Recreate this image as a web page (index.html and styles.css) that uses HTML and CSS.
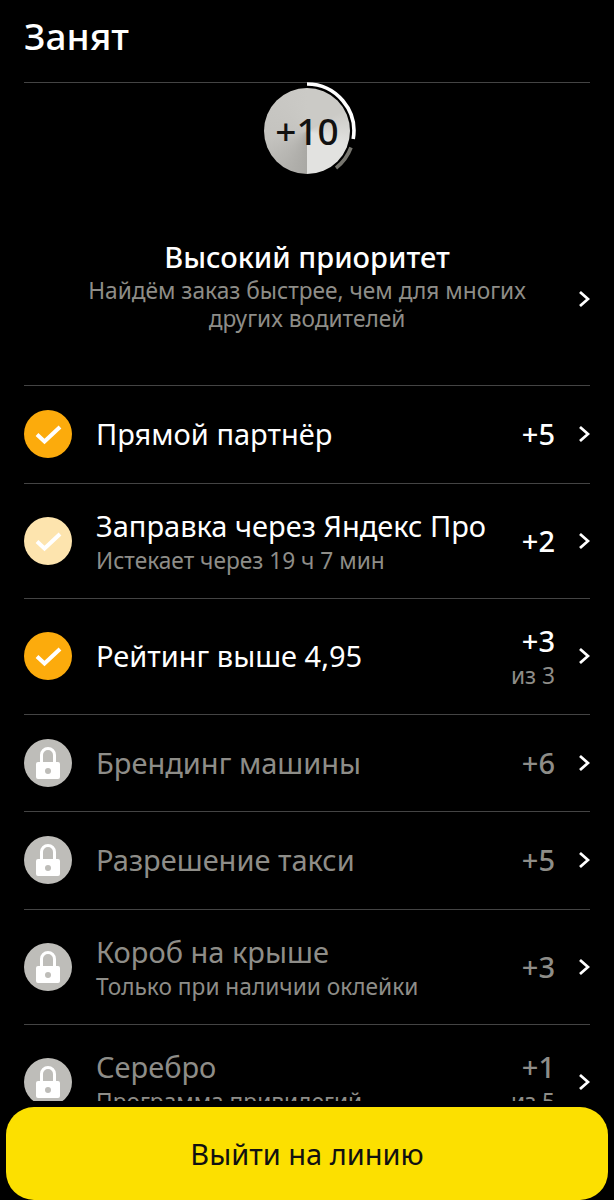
FILE: index.html
```html
<!DOCTYPE html>
<html lang="ru">
<head>
    <meta charset="UTF-8">
    <title>Занят</title>
    <link rel="stylesheet" href="styles.css">
</head>
<body>
    <svg class="defs" width="0" height="0">
        <symbol id="chevron" viewBox="0 0 12 18"><path d="M2 2l8 7-8 7" fill="none" stroke="#fff" stroke-width="2.8"/></symbol>
        <symbol id="check" viewBox="0 0 48 48"><path d="M13 24.500l7.500 7L36 17" fill="none" stroke="#fff" stroke-width="4"/></symbol>
        <symbol id="lock" viewBox="0 0 48 48">
            <path d="M17.500 24v-8a6.500 6.500 0 0 1 13 0v8" fill="none" stroke="#fff" stroke-width="3"/>
            <path fill="#fff" fill-rule="evenodd" d="M12 25a2 2 0 0 1 2-2h20a2 2 0 0 1 2 2v13a2 2 0 0 1-2 2H14a2 2 0 0 1-2-2zM24 29a3 3 0 1 0 0 6 3 3 0 0 0 0-6z"/>
        </symbol>
    </svg>
    <div class="screen">
        <header class="top">
            <h1>Занят</h1>
        </header>
        <section class="hero">
            <div class="badge">
                <svg class="badge-ring" width="100" height="100" viewBox="0 0 100 100">
                    <path d="M50 3A47 47 0 0 1 96.200 58" fill="none" stroke="#fff" stroke-width="3.600"/>
                    <path d="M94 66.500A47 47 0 0 1 79 87" fill="none" stroke="#77766f" stroke-width="3.600"/>
                </svg>
                <span class="badge-disc">+10</span>
            </div>
            <div class="hero-row">
                <div class="hero-text">
                    <h2>Высокий приоритет</h2>
                    <p>Найдём заказ быстрее, чем для многих других водителей</p>
                </div>
                <svg class="chevron"><use href="#chevron"/></svg>
            </div>
        </section>
        <ul class="list">
            <li class="row">
                <svg class="state on"><use href="#check"/></svg>
                <div class="info"><div class="name">Прямой партнёр</div></div>
                <div class="score"><div class="pts">+5</div></div>
                <svg class="chevron"><use href="#chevron"/></svg>
            </li>
            <li class="row tall">
                <svg class="state pale"><use href="#check"/></svg>
                <div class="info stack"><div class="name">Заправка через Яндекс Про</div><div class="note">Истекает через 19 ч 7 мин</div></div>
                <div class="score"><div class="pts">+2</div></div>
                <svg class="chevron"><use href="#chevron"/></svg>
            </li>
            <li class="row tall">
                <svg class="state on"><use href="#check"/></svg>
                <div class="info"><div class="name">Рейтинг выше 4,95</div></div>
                <div class="score stack"><div class="pts">+3</div><div class="note">из 3</div></div>
                <svg class="chevron"><use href="#chevron"/></svg>
            </li>
            <li class="row off">
                <svg class="state locked"><use href="#lock"/></svg>
                <div class="info"><div class="name">Брендинг машины</div></div>
                <div class="score"><div class="pts">+6</div></div>
                <svg class="chevron"><use href="#chevron"/></svg>
            </li>
            <li class="row off">
                <svg class="state locked"><use href="#lock"/></svg>
                <div class="info"><div class="name">Разрешение такси</div></div>
                <div class="score"><div class="pts">+5</div></div>
                <svg class="chevron"><use href="#chevron"/></svg>
            </li>
            <li class="row tall off">
                <svg class="state locked"><use href="#lock"/></svg>
                <div class="info stack"><div class="name">Короб на крыше</div><div class="note">Только при наличии оклейки</div></div>
                <div class="score"><div class="pts">+3</div></div>
                <svg class="chevron"><use href="#chevron"/></svg>
            </li>
            <li class="row tall off">
                <svg class="state locked"><use href="#lock"/></svg>
                <div class="info stack"><div class="name">Серебро</div><div class="note">Программа привилегий</div></div>
                <div class="score stack"><div class="pts">+1</div><div class="note">из 5</div></div>
                <svg class="chevron"><use href="#chevron"/></svg>
            </li>
        </ul>
        <footer class="bottom">
            <button class="go">Выйти на линию</button>
        </footer>
    </div>
</body>
</html>
```

FILE: styles.css
```css
* {
    box-sizing: border-box;
}
body {
    margin: 0;
    background: #000;
    color: #fff;
    font-family: "Noto Sans", Arial, sans-serif;
}
.defs {
    position: absolute;
}
.screen {
    position: relative;
    height: 1200px;
    overflow: hidden;
    padding: 0 24px;
}
.top {
    height: 83px;
    padding-top: 11px;
    border-bottom: 1px solid #444;
}
.top h1 {
    margin: 0;
    font-size: 37px;
    line-height: 50px;
    font-weight: 500;
}
.hero {
    height: 305px;
    border-bottom: 1px solid #444;
}
.badge {
    position: relative;
    width: 100px;
    height: 100px;
    margin: -2px auto 0;
}
.badge-ring {
    position: absolute;
    left: 0;
    top: 0;
}
.badge-disc {
    position: absolute;
    left: 7px;
    top: 7px;
    width: 86px;
    height: 86px;
    border-radius: 50%;
    background: conic-gradient(#cbcac6 0 60deg, #e2e2e0 110deg 180deg, #a9a8a4 180deg, #c4c3bf 260deg, #cbcac6 360deg);
    color: #111;
    font-size: 37px;
    line-height: 86px;
    text-align: center;
    font-weight: 500;
}
.hero-row {
    display: flex;
    align-items: center;
    margin-top: 58px;
}
.hero-row .chevron {
    margin-top: 26px;
}
.hero-text {
    flex: 1;
    padding: 0 28px 0 40px;
    text-align: center;
}
.hero-text h2 {
    margin: 0;
    font-size: 29px;
    line-height: 36px;
    font-weight: 500;
}
.hero-text p {
    margin: 2px 0 0;
    font-size: 22.700px;
    line-height: 28px;
    color: #8e8d88;
}
.chevron {
    flex: none;
    width: 12px;
    height: 18px;
}
.list {
    margin: 0;
    padding: 0;
    list-style: none;
}
.row {
    display: flex;
    align-items: center;
    height: 97.500px;
    border-bottom: 1px solid #444;
}
.row.tall {
    height: 115.500px;
}
.state {
    flex: none;
    width: 48px;
    height: 48px;
    border-radius: 50%;
    margin-right: 24px;
}
.state.on {
    background: #fcab0c;
}
.state.pale {
    background: #fde4ae;
}
.state.locked {
    background: #bebdb9;
}
.info {
    flex: 1;
    min-width: 0;
}
.stack {
    padding-top: 4px;
}
.name {
    font-size: 29px;
    line-height: 34px;
}
.note {
    margin-top: 2px;
    font-size: 22.700px;
    line-height: 32px;
    color: #8e8d88;
}
.score {
    flex: none;
    margin-right: 23px;
    text-align: right;
}
.pts {
    font-size: 29px;
    line-height: 34px;
    font-weight: 500;
}
.off .name,
.off .pts {
    color: #8e8d88;
}
.bottom {
    position: absolute;
    left: 0;
    right: 0;
    bottom: 0;
    padding: 6px 6px 0;
    background: #000;
}
.go {
    display: block;
    width: 100%;
    height: 93px;
    border: 0;
    border-radius: 28px;
    background: #fce000;
    color: #111;
    font-family: inherit;
    font-size: 29px;
}
```
